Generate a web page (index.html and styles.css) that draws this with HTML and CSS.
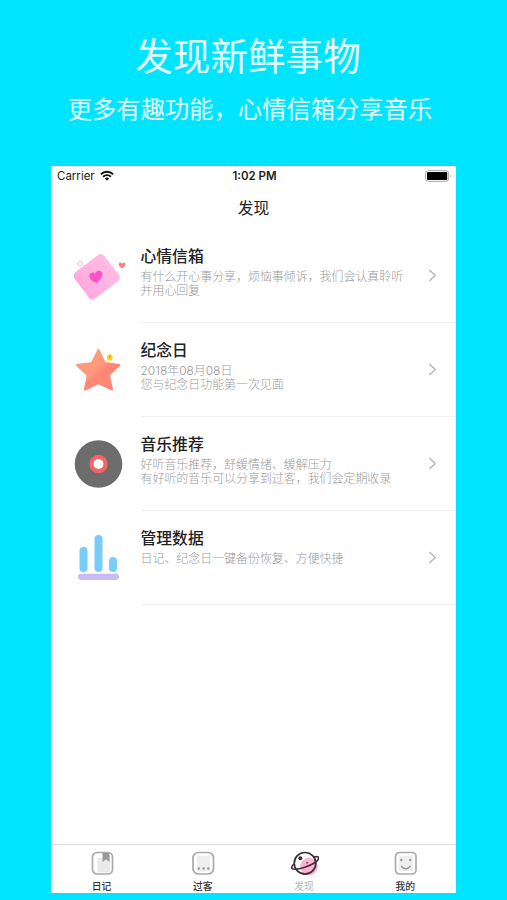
FILE: index.html
```html
<!DOCTYPE html>
<html lang="zh-CN">
<head>
  <meta charset="UTF-8">
  <title>发现</title>
  <meta name="viewport" content="width=device-width, initial-scale=1.0">
  <link rel="stylesheet" href="styles.css">
</head>
<body>

<h1>发现新鲜事物</h1>
<p class="sub">更多有趣功能，心情信箱分享音乐</p>

<div class="phone">
  <!-- 状态栏 -->
  <div class="status">
    <div class="carrier">
      <span>Carrier</span>
      <svg width="14" height="11" viewBox="0 0 14 11" fill="none" stroke="#111" stroke-width="1.9">
        <path d="M.9 4.2a8.7 8.7 0 0 1 12.2 0M3.1 6.7a5.6 5.6 0 0 1 7.8 0"/>
        <path d="M7 10.7 4.9 8.5a3 3 0 0 1 4.2 0z" fill="#111" stroke="none"/>
      </svg>
    </div>
    <div class="time">1:02 PM</div>
    <div class="battery">
      <svg width="27" height="12" viewBox="0 0 27 12">
        <rect x=".6" y=".6" width="23" height="10.8" rx="2.6" fill="#fff" stroke="#aaa"/>
        <rect x="2" y="2" width="20.2" height="8" rx="1" fill="#000"/>
        <path d="M25 4.2q1.6 1.8 0 3.6z" fill="#999"/>
      </svg>
    </div>
  </div>

  <div class="nav">发现</div>

  <!-- 功能列表 -->
  <div class="list">
    <div class="row">
      <svg class="icon" viewBox="0 0 60 56">
        <defs>
          <linearGradient id="card" x1="0" y1="0" x2="1" y2="0">
            <stop offset="0" stop-color="#ffa9df"/>
            <stop offset="1" stop-color="#ffbce3"/>
          </linearGradient>
        </defs>
        <rect x="10" y="12.300" width="37.500" height="33" rx="4.500" fill="url(#card)" transform="rotate(-37 28.700 28.800)"/>
        <path d="M29 35c-5-2-8.500-4.500-7.500-8 .8-2.800 4-3.500 5.500-1 1-3.600 5.700-4.300 7-1.200 1.500 3.700-2 6.500-5 10.200z" fill="#ff50c6"/>
        <path d="M54.200 20.300c-2.500-1.500-4-3-3.200-4.800.7-1.500 2.600-1.200 3.200.2 1-1.500 3-1.200 3.300.2.400 1.600-1.300 2.900-3.300 4.400z" fill="#ee8580"/>
        <path d="M10.200 17c-.5-2.500 1.200-4.600 2.800-4 .9.300 1 1.500.4 2.200 1.200 0 1.800 1 1.200 1.800-.7 1-2.500.9-4.400 0z" fill="#fff" stroke="#f7b9cd"/>
      </svg>
      <div class="text">
        <h2>心情信箱</h2>
        <p>有什么开心事分享，烦恼事倾诉，我们会认真聆听<br>并用心回复</p>
      </div>
      <svg class="arrow" viewBox="0 0 10 14"><path d="M1.200 1.200 7.500 7l-6.300 5.800"/></svg>
    </div>

    <div class="row">
      <svg class="icon" viewBox="0 0 60 56">
        <defs>
          <linearGradient id="star" x1="0" y1="0" x2="1" y2="1">
            <stop offset=".46" stop-color="#ff9a7f"/>
            <stop offset=".56" stop-color="#ff8773"/>
          </linearGradient>
        </defs>
        <path d="M30.500 8 36.700 21 51.300 23 40.700 33 44 47.500 30.500 41 17 47.500 19.800 33.500 9 23 24 21z" fill="url(#star)" stroke="url(#star)" stroke-width="2.200" stroke-linejoin="round"/>
        <ellipse cx="41.800" cy="15.500" rx="2.800" ry="3.200" fill="#f8d91b"/>
        <path d="M41.800 13.500v3" stroke="#d79a16" stroke-width="1.300"/>
      </svg>
      <div class="text">
        <h2>纪念日</h2>
        <p>2018年08月08日<br>您与纪念日功能第一次见面</p>
      </div>
      <svg class="arrow" viewBox="0 0 10 14"><path d="M1.200 1.200 7.500 7l-6.300 5.800"/></svg>
    </div>

    <div class="row">
      <svg class="icon" viewBox="0 0 60 56">
        <circle cx="30.500" cy="28" r="23.800" fill="#6c6c6c"/>
        <circle cx="30.500" cy="28" r="9.200" fill="#f56464"/>
        <circle cx="30.500" cy="28" r="5" fill="#fff"/>
      </svg>
      <div class="text">
        <h2>音乐推荐</h2>
        <p>好听音乐推荐，舒缓情绪、缓解压力<br>有好听的音乐可以分享到过客，我们会定期收录</p>
      </div>
      <svg class="arrow" viewBox="0 0 10 14"><path d="M1.200 1.200 7.500 7l-6.300 5.800"/></svg>
    </div>

    <div class="row">
      <svg class="icon" viewBox="0 0 60 56">
        <g fill="#78ccf8">
          <rect x="11.500" y="17" width="8" height="25" rx="4"/>
          <rect x="26.500" y="5" width="8" height="37" rx="4"/>
          <rect x="41" y="27" width="8" height="15" rx="4"/>
        </g>
        <rect x="10" y="43.700" width="41" height="6.200" rx="3.100" fill="#c8baf3"/>
      </svg>
      <div class="text">
        <h2>管理数据</h2>
        <p>日记、纪念日一键备份恢复、方便快捷</p>
      </div>
      <svg class="arrow" viewBox="0 0 10 14"><path d="M1.200 1.200 7.500 7l-6.300 5.800"/></svg>
    </div>
  </div>

  <!-- 底部标签栏 -->
  <div class="tabs">
    <div class="tab">
      <svg viewBox="0 0 30 26">
        <rect x="5.500" y="2.500" width="20" height="21.500" rx="4.500" fill="#fff" stroke="#aaa" stroke-width="1.700"/>
        <path d="M10.500 8h12.500v14.500H10.500z" fill="#e9e9e9"/>
        <path d="M15.500 3h7v9L19 9.200 15.500 12z" fill="#999"/>
      </svg>
      <span>日记</span>
    </div>
    <div class="tab">
      <svg viewBox="0 0 30 26">
        <rect x="5" y="2.500" width="20.500" height="21.500" rx="5.500" fill="#fff" stroke="#aaa" stroke-width="1.700"/>
        <path d="M9 5.500h13v16H9z" fill="#eee"/>
        <g fill="#999">
          <circle cx="10.800" cy="18.500" r="1.200"/>
          <circle cx="15.600" cy="18.500" r="1.200"/>
          <circle cx="20.400" cy="18.500" r="1.200"/>
        </g>
      </svg>
      <span>过客</span>
    </div>
    <div class="tab on">
      <svg viewBox="0 0 30 26">
        <circle cx="20" cy="16.500" r="8.800" fill="#ffb2d3"/>
        <circle cx="16" cy="13.300" r="10.800" fill="none" stroke="#3b3136" stroke-width="1.700"/>
        <path d="M25 7c3.300-.8 5-.2 4.700 1.200-.6 3.200-7.500 6.700-13.200 8.800-6.700 2.400-13.500 3.200-13.900.7-.2-1.400 1-2.700 3-4" fill="none" stroke="#3b3136" stroke-width="1.600"/>
        <circle cx="11.300" cy="8.300" r="2" fill="#3b3136"/>
        <circle cx="18" cy="12.700" r="1" fill="#8b435f"/>
      </svg>
      <span>发现</span>
    </div>
    <div class="tab">
      <svg viewBox="0 0 30 26">
        <rect x="5.500" y="2.500" width="20.500" height="21.500" rx="4" fill="#fff" stroke="#aaa" stroke-width="1.700"/>
        <path d="M9 5.500h14V21H9z" fill="#eee"/>
        <circle cx="11.300" cy="10" r="1.200" fill="#999"/>
        <circle cx="20.200" cy="10" r="1.200" fill="#999"/>
        <path d="M11 16q4.800 5.600 9.600 0" fill="none" stroke="#999" stroke-width="1.400"/>
      </svg>
      <span>我的</span>
    </div>
  </div>
</div>

</body>
</html>
```
FILE: styles.css
```css
* {
  margin: 0;
  padding: 0;
  box-sizing: border-box;
}

body {
  height: 900px;
  background-color: #00e5ff;
  font-family: "Noto Sans CJK SC", sans-serif;
  overflow: hidden;
}

h1 {
  padding-top: 24px;
  padding-right: 11px;
  color: #e4fdff;
  font-size: 37.6px;
  font-weight: 400;
  line-height: 60px;
  text-align: center;
}

.sub {
  padding-right: 7px;
  color: #e4fdff;
  font-size: 24.3px;
  font-weight: 400;
  line-height: 48px;
  height: 82px;
  text-align: center;
  white-space: nowrap;
}

.phone {
  display: flex;
  flex-direction: column;
  width: 405px;
  height: 727px;
  margin-left: 51px;
  background-color: #fff;
}

.status {
  display: grid;
  grid-template-columns: 1fr auto 1fr;
  align-items: center;
  height: 20px;
  padding: 0 4px 0 6px;
  font-family: Inter, sans-serif;
  font-size: 11.5px;
  color: #222;
}

.carrier {
  display: flex;
  align-items: center;
  gap: 5px;
}

.carrier svg {
  margin-top: -2px;
}

.time {
  font-weight: 600;
}

.battery {
  display: flex;
  justify-content: flex-end;
}

.nav {
  height: 43px;
  line-height: 43px;
  font-size: 15.8px;
  text-align: center;
  color: #222;
}

.list {
  flex: 1;
}

.row {
  display: flex;
  height: 94px;
  padding-left: 17px;
}

.icon {
  width: 60px;
  height: 56px;
  margin-top: 19px;
  overflow: visible;
}

.text {
  flex: 1;
  margin-left: 12.5px;
  padding-top: 15px;
  border-bottom: 1px solid #eeeff1;
}

.text h2 {
  margin-bottom: 2px;
  font-size: 15.8px;
  font-weight: 500;
  line-height: 24px;
  color: #222;
}

.text p {
  font-family: Inter, "Noto Sans CJK SC", sans-serif;
  font-size: 11.95px;
  font-weight: 300;
  line-height: 14px;
  color: #999;
  white-space: nowrap;
}

.arrow {
  width: 28px;
  height: 94px;
  padding: 40px 18px 40px 0;
  border-bottom: 1px solid #eeeff1;
  fill: none;
  stroke: #b9b9b9;
  stroke-width: 1.5;
}

.tabs {
  display: grid;
  grid-template-columns: repeat(4, 1fr);
  height: 49px;
  border-top: 1px solid #ddd;
}

.tab {
  display: flex;
  flex-direction: column;
  align-items: center;
  padding-top: 5px;
  font-size: 9.8px;
  font-weight: 500;
  color: #333;
}

.tab svg {
  width: 30px;
  height: 26px;
}

.tab span {
  padding-top: 2px;
  line-height: 16px;
}

.tab.on {
  color: #b5b5b5;
  font-weight: 400;
}
```
